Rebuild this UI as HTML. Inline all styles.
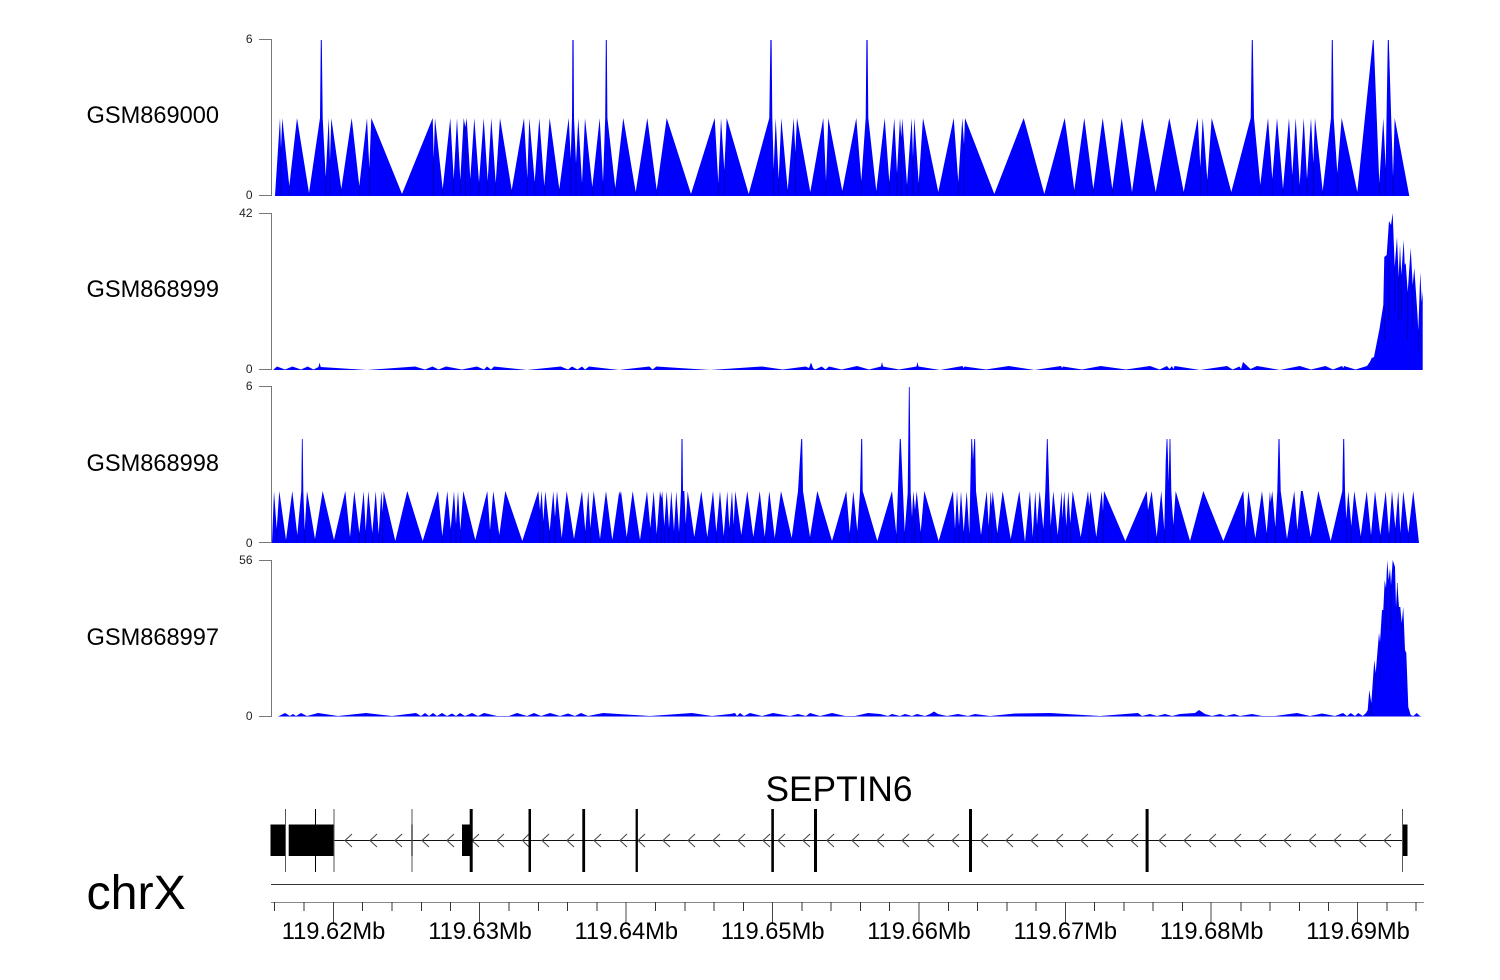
<!DOCTYPE html>
<html>
<head>
<meta charset="utf-8">
<style>
html,body{margin:0;padding:0;background:#fff;width:1500px;height:980px;overflow:hidden}
svg{display:block}
text{font-family:"Liberation Sans",sans-serif;fill:#000}
.l{font-size:23.6px}
.a{font-size:12px;text-anchor:end;fill:#222}
.m{font-size:23.7px;text-anchor:middle}
.ax{stroke:#777;stroke-width:1;fill:none}
.tr{fill:#0000ff;stroke:none}
.dk{stroke:#000080;stroke-width:.7;fill:none;stroke-opacity:.75}
</style>
</head>
<body>
<svg width="1500" height="980" viewBox="0 0 1500 980" xmlns="http://www.w3.org/2000/svg">
<!-- labels -->
<text class="l" x="86.5" y="123">GSM869000</text>
<text class="l" x="86.5" y="297">GSM868999</text>
<text class="l" x="86.5" y="471">GSM868998</text>
<text class="l" x="86.5" y="645">GSM868997</text>
<!-- axes -->
<path class="ax" d="M259 39.5H271.5V195.5H259M259 213.5H271.5V369.5H259M259 386.5H271.5V542.5H259M259 560.5H271.5V716.5H259"/>
<text class="a" x="252.5" y="43">6</text><text class="a" x="252.5" y="199">0</text>
<text class="a" x="252.5" y="217">42</text><text class="a" x="252.5" y="373">0</text>
<text class="a" x="252.5" y="390">6</text><text class="a" x="252.5" y="547">0</text>
<text class="a" x="252.5" y="564">56</text><text class="a" x="252.5" y="720">0</text>

<!-- track 1 -->
<polygon class="tr" points="275,196 280,118 281,148 282.3,118 289.3,186 297,118 309,193 320,118 320.8,40 321.8,40 322.7,118 325.7,177 328.7,118 330,160 331.3,118 341.3,189 351.7,118 359.3,186 367,118 369.3,168 371.3,118 402,194 432.7,118 433.7,158 435,118 442.7,189 450.3,118 453.7,179 457,118 460.3,180 463.7,118 465.3,127 466.7,118 470.3,179 474.3,118 479,182 483.7,118 487.7,181 491.3,118 495.7,183 500,118 511.7,190 524,118 527.3,178 529.3,118 534.7,182 539.3,118 544.3,186 549.7,118 559.3,189 568.7,118 570.7,158 572,118 572.4,40 573.6,40 574,118 576,163 578.3,118 582,183 585,118 592.3,187 599.7,118 603,182 605.2,118 605.8,40 606.8,40 607.4,118 615.3,188 623.3,118 635.7,192 647.3,118 656.7,190 666.7,118 691,194 714.7,118 718.3,183 721,118 724.3,170 726.7,118 748.7,194 769.3,118 770.4,40 771.6,40 772.3,118 773.7,169 775.7,118 778.7,179 781.3,118 787.7,190 793.7,118 795.3,152 797,118 810.3,192 823.3,118 826,181 828.3,118 842.3,191 856.3,118 861.3,181 865.7,118 866.4,40 867.6,40 868.3,118 876.3,191 884.7,118 889.3,182 894.3,118 897,173 900,118 901.3,137 902.3,118 907,185 911.7,118 913,157 914.3,118 918.7,183 923,118 938.3,192 953.7,118 958.3,182 962.3,118 964,144 965,118 994.3,194 1023.7,118 1044.3,194 1064.7,118 1074.3,190 1084.3,118 1093.3,189 1102.7,118 1112.3,189 1121.7,118 1132,192 1142.3,118 1155.7,192 1169.3,118 1183.7,192 1197.7,118 1200.3,167 1202.7,118 1207.3,180 1211.7,118 1231.3,192 1250.7,118 1251.8,40 1252.8,40 1254,118 1260.3,185 1268,118 1272.3,179 1277,118 1283,189 1289,118 1292.3,175 1295.7,118 1299.7,185 1303.7,118 1307,179 1311,118 1313.3,163 1315,118 1322.7,191 1331,118 1331.8,40 1332.8,40 1333.7,118 1337.3,173 1341.7,118 1357.3,192 1372.9,40 1373.7,40 1379.3,183 1383.3,118 1385.7,168 1387.8,40 1388.8,40 1393,176 1394.7,118 1409.3,196"/>
<path class="dk" d="M281 148V196M289.3 186V196M309 193V196M325.7 177V196M330 160V196M341.3 189V196M359.3 186V196M369.3 168V196M402 194V196M433.7 158V196M442.7 189V196M453.7 179V196M460.3 180V196M465.3 127V196M470.3 179V196M479 182V196M487.7 181V196M495.7 183V196M511.7 190V196M527.3 178V196M534.7 182V196M544.3 186V196M559.3 189V196M570.7 158V196M576 163V196M582 183V196M592.3 187V196M603 182V196M615.3 188V196M635.7 192V196M656.7 190V196M691 194V196M718.3 183V196M724.3 170V196M748.7 194V196M773.7 169V196M778.7 179V196M787.7 190V196M795.3 152V196M810.3 192V196M826 181V196M842.3 191V196M861.3 181V196M876.3 191V196M889.3 182V196M897 173V196M901.3 137V196M907 185V196M913 157V196M918.7 183V196M938.3 192V196M958.3 182V196M964 144V196M994.3 194V196M1044.3 194V196M1074.3 190V196M1093.3 189V196M1112.3 189V196M1132 192V196M1155.7 192V196M1183.7 192V196M1200.3 167V196M1207.3 180V196M1231.3 192V196M1260.3 185V196M1272.3 179V196M1283 189V196M1292.3 175V196M1299.7 185V196M1307 179V196M1313.3 163V196M1322.7 191V196M1337.3 173V196M1357.3 192V196M1379.3 183V196M1385.7 168V196M1393 176V196"/>

<!-- track 2 -->
<polygon class="tr" points="273,370 277,366.5 285,369.5 292.4,366.5 301,369.5 307.7,366.5 313.5,369.5 318.5,367 319.6,362.5 320.7,367 367,370 415,366.5 425,369.5 432.5,366.5 438.6,369.5 446,366.5 462,369.5 477,366.5 484,369.5 487,366.5 491,369.5 494,366.5 527,370 560.7,366.5 568,369.5 572,366.5 577.5,369.5 582,366.5 585,369.5 589,366.5 619,370 649.5,366.5 652.5,369.5 656.4,366.5 710,370 761.6,366.5 782.7,369.5 805.6,366.5 809,368 811,362.5 813,368 815,369.5 821.7,366.5 825.5,369.5 829,366.5 841.7,369.5 857,366 869,369.5 881,366.5 882,362 883,366.5 899,369.5 916.5,366.5 917.5,362 918.5,366.5 940,370 962.5,366 963.5,368 964.5,366.5 986,369.5 1008.7,366 1034.6,370 1061,366 1062,368 1063,366.5 1082,369.5 1100.7,366 1126,369.5 1150,366 1159.6,369.5 1167,366 1169.5,369 1172,366 1173.3,369 1174.7,366 1200,370 1227,366 1232.6,369.5 1239.5,366.5 1241,369 1243,362 1250.5,369 1257,366 1280,370 1299.7,366 1311,369.5 1325.5,366 1333,369.5 1342,366 1343.4,368 1344,366 1355.5,369.5 1367,366 1370,361.7 1371.7,358 1374,357 1376.7,343 1379.3,330 1381.7,315 1383.3,305 1384.3,257 1386.7,255 1389,221 1391,225 1392.7,213 1394.7,267 1397,237 1398.7,277 1400,245 1401.3,275 1403.7,240 1404.7,265 1405.7,263 1407.7,292 1410.7,248 1412.7,285 1414.3,268 1417.3,312 1418.3,330 1420.3,272 1421.7,302 1422.7,291 1422.7,370"/>
<path class="dk" d="M1384.3 305V340M1389 260V320M1394.7 267V310M1398.7 277V320M1401.3 275V320M1407.7 292V340M1412.7 285V330M1418.3 330V350"/>

<!-- track 3 -->
<polygon class="tr" points="272,543 274,491 276.7,529 279.3,491 286,540 292.3,491 297.3,535 301.3,491 301.9,439 302.7,439 303.3,491 304.7,530 307,491 315,539 322.7,491 334,540 345.3,491 350,537 354.3,491 359.3,533 363.7,491 365.7,531 368.3,491 372.3,533 375.7,491 378.7,534 381.3,491 382.7,512 383.7,491 395.3,541 407.3,491 422.7,541 438,491 442.3,536 447.3,491 450.7,529 454,491 456,524 458,491 460.3,530 463.3,491 475.3,540 487.3,491 490,530 493.3,491 499.3,535 505.3,491 522.3,541 538.3,491 540,510 541.7,491 543.3,521 545.3,491 549.7,531 553.3,491 555,517 557,491 561.7,538 566.7,491 574,539 582,491 585.3,531 588.3,491 590.3,528 593.7,491 600,539 606,491 612.3,540 619.3,491 620,495 621,491 626.7,537 632.7,491 640,540 647,491 650.3,528 653.7,491 656.7,534 660,491 661.3,498 662.3,491 664.3,526 666.7,491 669,528 671.3,491 674,531 676.3,491 679,532 681,491 681.5,439 682.5,439 683,491 684.3,491 685.7,524 687.7,491 694.3,537 701.3,491 707.3,537 713,491 716.3,532 720,491 723.7,536 727.3,491 729.3,528 732,491 733.7,525 735.3,491 741.3,535 747.3,491 753.3,537 759.7,491 764.7,537 769.3,491 774.7,538 781,491 791.7,538 798,491 801.2,439 802.2,439 803,491 810,537 817.3,491 832,541 846.3,491 849.7,533 853.3,491 857.3,531 860,491 861.2,439 862.2,439 862.7,491 877.3,541 892,491 896.3,534 899.8,439 900.8,439 904.7,532 907.7,493 908.9,387 909.7,387 910.7,493 912,517 913.3,491 915,510 916.7,491 920.7,532 924.3,491 938.7,541 953,491 955,529 957,491 959,526 961,491 963.7,532 966.7,491 969.3,534 971.3,439 972.1,439 973,460 974.3,439 975.1,439 976,491 981,535 986.7,491 988.7,526 990.7,491 991.7,506 992.7,491 997.3,533 1002.7,491 1010.7,539 1019.3,491 1025,542 1030,491 1032.7,537 1035.3,491 1037,525 1039.7,491 1043.3,529 1045.3,491 1046.9,439 1047.7,439 1049.3,491 1050.7,526 1053.3,491 1057.7,535 1061.7,491 1062.3,518 1064.3,491 1066.3,526 1068.3,491 1070.3,523 1072.7,491 1080.7,537 1088,491 1089.3,506 1090.3,491 1096.3,537 1101.7,491 1103,511 1104,491 1125.3,541 1146.7,491 1148,510 1151.7,491 1156.7,537 1161.3,491 1164.3,530 1165.7,462 1166.6,439 1167.4,439 1168.7,482 1169.6,439 1170.4,439 1171.3,491 1173.3,525 1175.7,491 1190,541 1203.3,491 1223.3,541 1243.3,491 1245.7,528 1248.3,491 1255.3,538 1262,491 1266.7,533 1270,491 1270.7,502 1272.3,491 1275.3,527 1277.3,491 1278.5,439 1279.5,439 1280.7,491 1287,539 1294.3,491 1297.3,530 1301,491 1302.7,491 1310.7,537 1318.3,491 1330.7,541 1342.3,491 1343.2,439 1344.2,439 1345,491 1346.3,519 1348.3,491 1351.3,526 1354.3,491 1360.7,536 1366.7,491 1371,535 1375,491 1380.3,535 1385.7,491 1389,534 1392,491 1395.3,528 1398.3,491 1400.3,533 1403.3,491 1408.3,533 1413.3,491 1419,543"/>
<path class="dk" d="M276.7 529V543M286 540V543M297.3 535V543M304.7 530V543M315 539V543M334 540V543M350 537V543M359.3 533V543M365.7 531V543M372.3 533V543M378.7 534V543M382.7 512V543M395.3 541V543M442.3 536V543M450.7 529V543M456 524V543M460.3 530V543M475.3 540V543M490 530V543M499.3 535V543M540 510V543M543.3 521V543M549.7 531V543M555 517V543M561.7 538V543M574 539V543M585.3 531V543M590.3 528V543M600 539V543M612.3 540V543M626.7 537V543M650.3 528V543M656.7 534V543M661.3 498V543M664.3 526V543M669 528V543M674 531V543M679 532V543M685.7 524V543M694.3 537V543M707.3 537V543M716.3 532V543M723.7 536V543M729.3 528V543M733.7 525V543M741.3 535V543M753.3 537V543M764.7 537V543M774.7 538V543M791.7 538V543M810 537V543M849.7 533V543M857.3 531V543M896.3 534V543M904.7 532V543M912 517V543M915 510V543M920.7 532V543M955 529V543M959 526V543M963.7 532V543M969.3 534V543M981 535V543M988.7 526V543M991.7 506V543M997.3 533V543M1010.7 539V543M1032.7 537V543M1037 525V543M1043.3 529V543M1050.7 526V543M1057.7 535V543M1062.3 518V543M1066.3 526V543M1070.3 523V543M1080.7 537V543M1089.3 506V543M1096.3 537V543M1103 511V543M1148 510V543M1156.7 537V543M1164.3 530V543M1173.3 525V543M1245.7 528V543M1255.3 538V543M1266.7 533V543M1275.3 527V543M1287 539V543M1297.3 530V543M1310.7 537V543M1346.3 519V543M1351.3 526V543M1360.7 536V543M1371 535V543M1380.3 535V543M1389 534V543M1395.3 528V543M1400.3 533V543M1408.3 533V543"/>

<!-- track 4 -->
<polygon class="tr" points="278,716.5 285,713 290,716 293,714 296,716 301,713 307,716 318,713 338,716 366,713 392,716 416,713 421,716 425,713 429,716 433,713 437,716 442,713 447,716 452,713.5 456,716 460,713 465,716 472,713 478,716 484,713 497,716 509,716 517,713 527,716 534,713 541,716 550,713 560,716 568,713.5 575,716 581,713 588,716 603,713 650,716 692,713 712,716 730,714 735,713 737,716 740,713 744,716 750,713 762,716 773,713 790,716 798,714 806,716 810,713 820,716 832,713 845,716 855,716 868,713 880,714 888,716 892,714 900,716 905,714 912,716 917,714 925,716 930,714 934,711.5 938,714 947,716 958,714 968,716 975,714 990,716 1015,713.5 1050,713 1100,716 1138,713 1142,716 1150,714 1157,716 1165,714 1172,716 1180,714 1195,713 1199,710 1205,714 1212,716 1220,714 1226,716 1234,714 1240,716 1252,714 1262,716 1275,716 1297,713 1310,716 1322,713.5 1335,716 1343,713 1347,716 1350.7,713 1355,716 1358.3,713 1362.7,716 1366,713 1367.7,710 1369.3,690 1371.3,703 1374.3,660 1375.7,673 1379,633 1380,642 1382,610 1383.3,610 1384.7,580 1386,588 1387.3,560 1388.7,580 1390,568 1391,585 1392.7,560 1395,567 1396,607 1397.3,583 1399,607 1400.3,607 1401.7,623 1403.3,607 1405,650 1406.3,653 1408.3,707 1410.7,715 1413.3,716 1416.7,713 1420,716 1422,716.5"/>
<path class="dk" d="M1371.3 703V716M1375.7 673V700M1380 642V680M1386 588V630M1391 585V630M1397.3 583V620M1401.7 623V650"/>

<!-- gene -->
<text x="839" y="801" style="font-size:35.3px;text-anchor:middle">SEPTIN6</text>
<text x="86.5" y="909" style="font-size:48.3px">chrX</text>
<path d="M334 840.5H1403" stroke="#111" stroke-width="1" fill="none"/>
<path fill="none" stroke="#444" stroke-width="1" d="M352 834L345 840.5L352 847M377 834L370 840.5L377 847M402 834L395 840.5L402 847M429 834L422 840.5L429 847M454 834L447 840.5L454 847M479 834L472 840.5L479 847M504 834L497 840.5L504 847M529 834L522.5 840.5L529 847M549 834L542 840.5L549 847M574 834L567 840.5L574 847M601 834L594 840.5L601 847M627 834L620 840.5L627 847M645 834L638 840.5L645 847M670 834L663 840.5L670 847M695 834L688 840.5L695 847M720 834L713 840.5L720 847M745 834L738 840.5L745 847M770 834L763 840.5L770 847M785 834L778 840.5L785 847M810 834L803 840.5L810 847M834 834L827 840.5L834 847M859 834L852 840.5L859 847M884 834L877 840.5L884 847M909 834L902 840.5L909 847M934 834L927 840.5L934 847M959 834L952 840.5L959 847M988 834L981 840.5L988 847M1013 834L1006 840.5L1013 847M1038 834L1031 840.5L1038 847M1063 834L1056 840.5L1063 847M1088 834L1081 840.5L1088 847M1113 834L1106 840.5L1113 847M1138 834L1131 840.5L1138 847M1166 834L1159 840.5L1166 847M1191 834L1184 840.5L1191 847M1216 834L1209 840.5L1216 847M1241 834L1234 840.5L1241 847M1266 834L1259 840.5L1266 847M1291 834L1284 840.5L1291 847M1316 834L1309 840.5L1316 847M1341 834L1334 840.5L1341 847M1366 834L1359 840.5L1366 847M1391 834L1384 840.5L1391 847"/>
<g fill="#000">
<rect x="270.5" y="824.5" width="15.5" height="31.5"/>
<rect x="288.7" y="824.5" width="45.3" height="31.5"/>
<rect x="462" y="824.5" width="9" height="31.5"/>
<rect x="469.7" y="809" width="3" height="63"/>
<rect x="528.5" y="809" width="2.5" height="63"/>
<rect x="582.3" y="809" width="2.8" height="63"/>
<rect x="635.6" y="809" width="2.3" height="63"/>
<rect x="771.3" y="809" width="2.6" height="63"/>
<rect x="814" y="809" width="3" height="63"/>
<rect x="969" y="809" width="3" height="63"/>
<rect x="1145.6" y="809" width="3" height="63"/>
<rect x="1402.5" y="824.5" width="5" height="31.5"/>
<rect x="411.3" y="824.5" width="1.4" height="31.5"/>
</g>
<path stroke="#555" stroke-width="1" fill="none" d="M285.5 809V872M334 809V872M412 809V872M1402.5 809V872"/>
<path stroke="#000" stroke-width="1" fill="none" d="M315.5 809V872"/>
<path d="M271 884.5H1424" stroke="#333" stroke-width="1" fill="none"/>
<!-- scale axis -->
<path d="M271 902.5H1424" stroke="#888" stroke-width="1" fill="none"/>
<path stroke="#333" stroke-width="1" fill="none" d="M274.5 902V911M304 902V911M362.5 902V911M392 902V911M421.5 902V911M450.5 902V911M509 902V911M538.5 902V911M567.5 902V911M597 902V911M655.5 902V911M685 902V911M714 902V911M743.5 902V911M802 902V911M831 902V911M860.5 902V911M889.5 902V911M948.5 902V911M977.5 902V911M1007 902V911M1036 902V911M1094.5 902V911M1124 902V911M1153 902V911M1182.5 902V911M1241 902V911M1270 902V911M1299.5 902V911M1328.5 902V911M1387 902V911M1416 902V911"/>
<path stroke="#444" stroke-width="1" fill="none" d="M333.5 902V923M479.5 902V923M626 902V923M772.5 902V923M919 902V923M1065.5 902V923M1211 902V923M1357.5 902V923"/>
<text class="m" x="333.5" y="939">119.62Mb</text>
<text class="m" x="480" y="939">119.63Mb</text>
<text class="m" x="626.3" y="939">119.64Mb</text>
<text class="m" x="772.7" y="939">119.65Mb</text>
<text class="m" x="919" y="939">119.66Mb</text>
<text class="m" x="1065.3" y="939">119.67Mb</text>
<text class="m" x="1211.6" y="939">119.68Mb</text>
<text class="m" x="1358" y="939">119.69Mb</text>
</svg>
</body>
</html>
